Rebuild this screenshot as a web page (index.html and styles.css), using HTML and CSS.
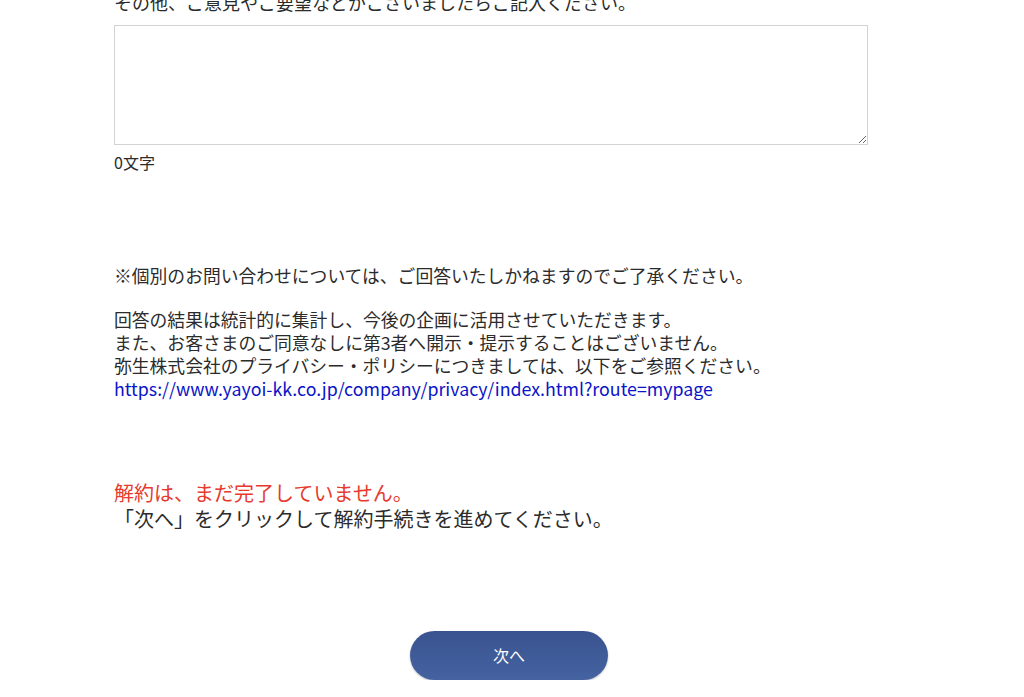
FILE: index.html
```html
<!DOCTYPE html>
<html lang="ja">
<head>
    <meta charset="UTF-8">
    <meta name="viewport" content="width=device-width, initial-scale=1.0">
    <title>解約アンケート</title>
    <link rel="stylesheet" href="styles.css">
</head>
<body>
    <main class="survey">
        <!-- その他ご意見 -->
        <div class="form-group">
            <label for="comment" class="question">その他、ご意見やご要望などがございましたらご記入ください。</label>
            <textarea id="comment" name="comment" class="comment-box"></textarea>
            <div class="char-count" id="char-count">0文字</div>
        </div>

        <!-- 注意事項 -->
        <div class="notes">
            <p>※個別のお問い合わせについては、ご回答いたしかねますのでご了承ください。</p>
            <p>
                回答の結果は統計的に集計し、今後の企画に活用させていただきます。<br>
                また、お客さまのご同意なしに第3者へ開示・提示することはございません。<br>
                弥生株式会社のプライバシー・ポリシーにつきましては、以下をご参照ください。<br>
                <a href="#" class="privacy-link">https://www.yayoi-kk.co.jp/company/privacy/index.html?route=mypage</a>
            </p>
        </div>

        <!-- 解約未完了の案内 -->
        <div class="status">
            <p class="status-warning">解約は、まだ完了していません。</p>
            <p>「次へ」をクリックして解約手続きを進めてください。</p>
        </div>

        <div class="actions">
            <button type="button" class="next-button">次へ</button>
        </div>
    </main>

    <script>
        const comment = document.getElementById('comment');
        const charCount = document.getElementById('char-count');

        comment.addEventListener('input', () => {
            charCount.textContent = `${comment.value.length}文字`;
        });
    </script>
</body>
</html>
```

FILE: styles.css
```css
:root {
    --text-color: #2b2b2b;
    --warning-color: #e63a2e;
    --link-color: #0a14c8;
    --button-top: #39538f;
    --button-bottom: #4562a1;
    --border-color: #d3d3d3;
}

* {
    margin: 0;
    padding: 0;
    box-sizing: border-box;
}

body {
    font-family: "Noto Sans CJK JP", "Noto Sans", sans-serif;
    color: var(--text-color);
    background: #fff;
    overflow: hidden;
}

.survey {
    width: 790px;
    margin: -9px 0 0 114px;
}

.question {
    display: block;
    font-size: 18px;
    line-height: 23px;
    margin-bottom: 11px;
}

.comment-box {
    display: block;
    width: 754px;
    height: 120px;
    border: 1px solid var(--border-color);
    resize: vertical;
    font-family: inherit;
    font-size: 16px;
    padding: 6px;
}

.char-count {
    font-size: 16px;
    line-height: 24px;
    margin-top: 5px;
}

.notes {
    margin-top: 90px;
    font-size: 17.8px;
    line-height: 23px;
}

.notes p + p {
    margin-top: 21px;
}

.privacy-link {
    color: var(--link-color);
    text-decoration: none;
}

.status {
    margin-top: 80px;
    font-size: 20px;
    line-height: 26px;
}

.status-warning {
    color: var(--warning-color);
}

.actions {
    display: flex;
    justify-content: center;
    margin-top: 99px;
}

.next-button {
    width: 198px;
    height: 49px;
    border: none;
    border-radius: 25px;
    background: linear-gradient(var(--button-top), var(--button-bottom));
    box-shadow: 0 1px 2px rgba(0, 0, 0, 0.25);
    color: #fff;
    font-family: inherit;
    font-size: 16px;
    line-height: 1;
    padding-bottom: 2px;
    cursor: pointer;
}
```
